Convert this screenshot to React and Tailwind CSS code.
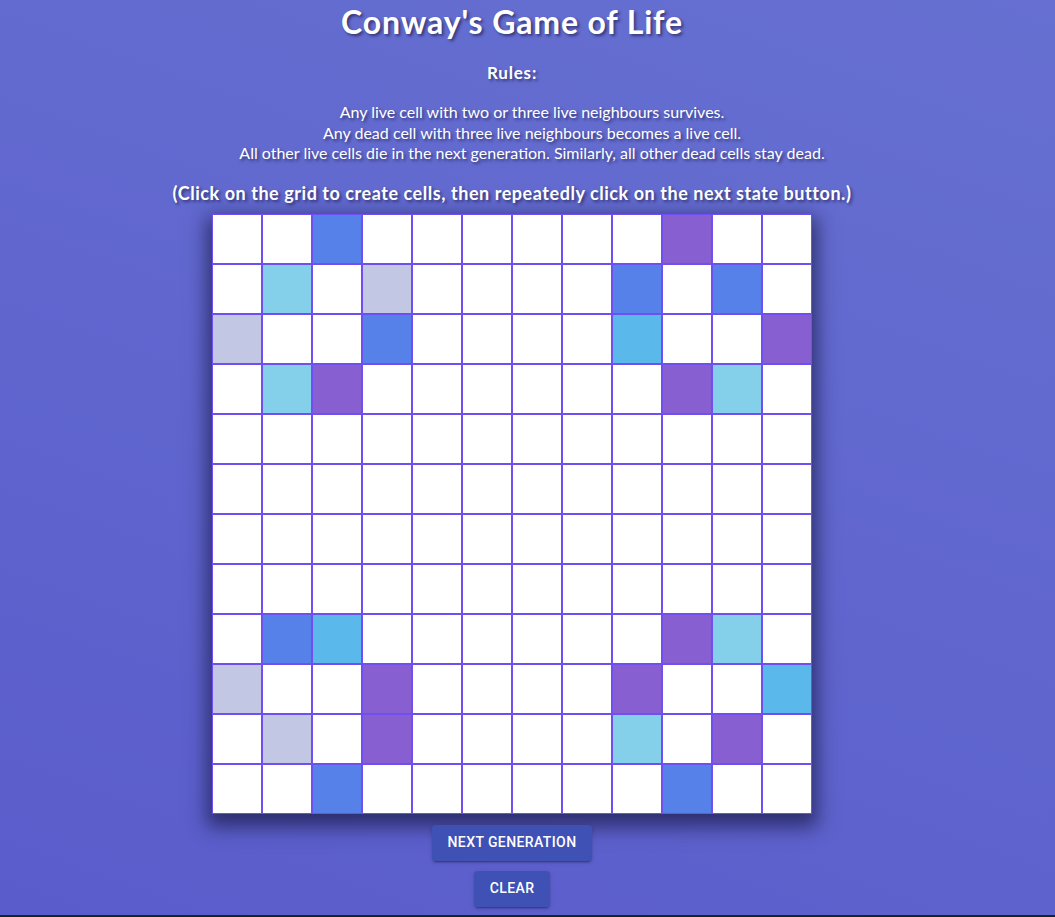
import React, { useState } from "react";

const COLORS = {
  b: "bg-[#5581e8]",
  l: "bg-[#84cfea]",
  g: "bg-[#c2c8e3]",
  p: "bg-[#885fd1]",
  s: "bg-[#5ab9ea]",
};

// 12x12 board, "." = dead
const START = [
  "..b......p..",
  ".l.g....b.b.",
  "g..b....s..p",
  ".lp......pl.",
  "............",
  "............",
  "............",
  "............",
  ".bs......pl.",
  "g..p....p..s",
  ".g.p....l.p.",
  "..b......b..",
];

const Cell = ({ value, onClick }) => (
  <div
    onClick={onClick}
    className={`w-[50px] h-[50px] border border-[#6f4ef2] cursor-pointer ${
      value === "." ? "bg-white" : COLORS[value]
    }`}
  />
);

export default function App() {
  const [board, setBoard] = useState(START.map((row) => row.split("")));

  const toggle = (r, c) => {
    setBoard((prev) =>
      prev.map((row, i) =>
        i !== r ? row : row.map((v, j) => (j !== c ? v : v === "." ? "b" : "."))
      )
    );
  };

  const next = () => {
    setBoard((prev) =>
      prev.map((row, r) =>
        row.map((v, c) => {
          let n = 0;
          for (let dr = -1; dr <= 1; dr++)
            for (let dc = -1; dc <= 1; dc++) {
              if (!dr && !dc) continue;
              const x = prev[r + dr]?.[c + dc];
              if (x && x !== ".") n++;
            }
          if (v !== "." && (n === 2 || n === 3)) return v;
          if (v === "." && n === 3) return "b";
          return ".";
        })
      )
    );
  };

  const clear = () => setBoard(START.map((row) => row.split("").map(() => ".")));

  const shadow = "[text-shadow:2px_2px_3px_rgba(20,20,60,0.6)]";
  const btn =
    "h-[36px] px-4 rounded bg-[#3f51b5] font-['Roboto',sans-serif] text-[14px] font-medium tracking-[0.4px] uppercase shadow-[0_3px_1px_-2px_rgba(0,0,0,0.2),0_2px_2px_0_rgba(0,0,0,0.14),0_1px_5px_0_rgba(0,0,0,0.12)]";

  return (
    <div className="w-full bg-[#0e2a22] pb-[2px]">
      <div className="h-[915px] bg-[linear-gradient(20deg,#5a5ccb_0%,#6670d1_100%)] font-['Lato',sans-serif] text-white">
        <div className="w-[1024px] flex flex-col items-center">
          <h1 className={`text-[32px] leading-[44px] font-bold tracking-[0.85px] ${shadow}`}>
            Conway's Game of Life
          </h1>
          <h3 className={`mt-[18px] text-[17px] leading-[22px] font-bold tracking-[0.8px] ${shadow}`}>
            Rules:
          </h3>
          <ul className={`mt-[18px] w-full pl-10 text-[16px] leading-[20.5px] text-center ${shadow}`}>
            <li>Any live cell with two or three live neighbours survives.</li>
            <li>Any dead cell with three live neighbours becomes a live cell.</li>
            <li>
              All other live cells die in the next generation. Similarly, all other dead cells stay dead.
            </li>
          </ul>
          <h3 className={`mt-[17px] text-[18px] leading-[24px] font-bold tracking-[0.55px] ${shadow}`}>
            (Click on the grid to create cells, then repeatedly click on the next state button.)
          </h3>
          <div className="mt-[9px] grid grid-cols-[repeat(12,50px)] shadow-[0_8px_18px_5px_rgba(25,25,70,0.7)]">
            {board.map((row, r) =>
              row.map((v, c) => (
                <Cell key={`${r}-${c}`} value={v} onClick={() => toggle(r, c)} />
              ))
            )}
          </div>
          <button onClick={next} className={`mt-[11px] ${btn}`}>
            Next Generation
          </button>
          <button onClick={clear} className={`mt-[10px] ${btn}`}>
            Clear
          </button>
        </div>
      </div>
    </div>
  );
}
